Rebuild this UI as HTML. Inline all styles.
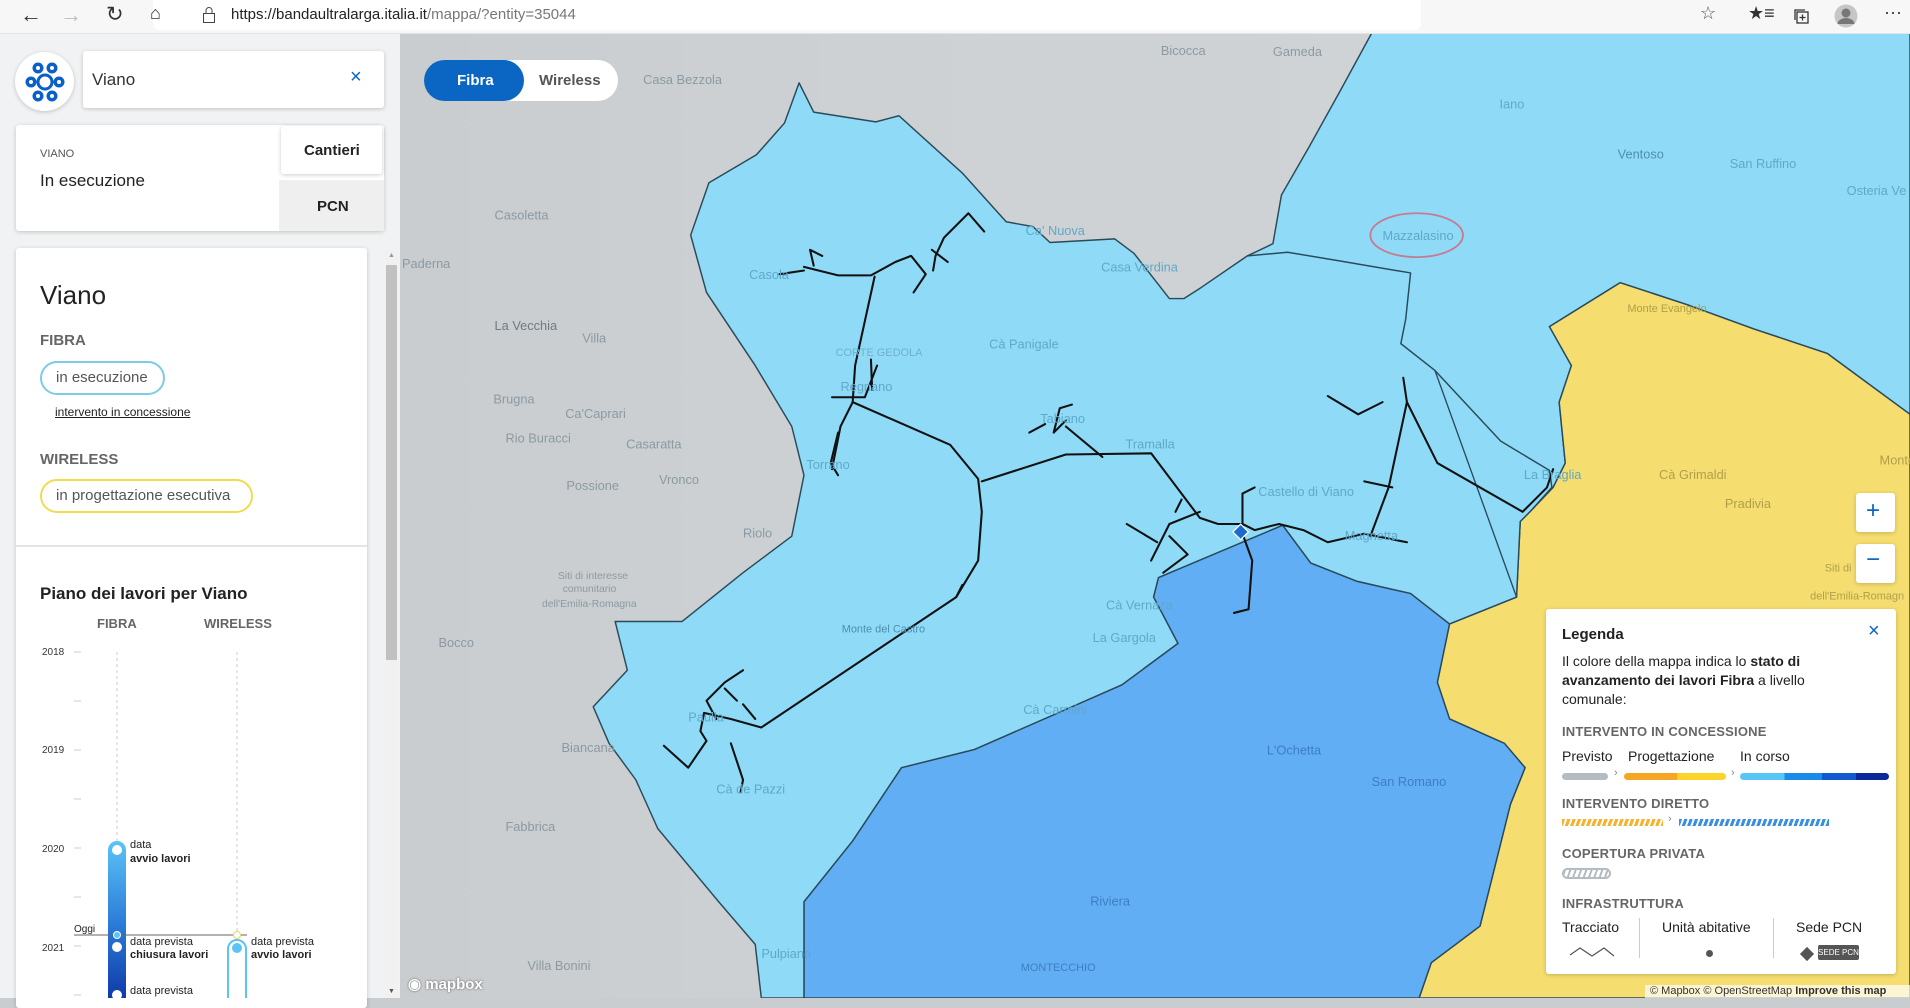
<!DOCTYPE html>
<html><head><meta charset="utf-8"><style>
*{margin:0;padding:0;box-sizing:border-box}
body{width:1910px;height:998px;overflow:hidden;font-family:"Liberation Sans",sans-serif;background:#c9cdd0;position:relative}
.abs{position:absolute}
#map{position:absolute;left:0;top:0;width:1910px;height:998px}
.tb{left:0;top:0;width:1910px;height:34px;background:#f7f7f7;border-bottom:1px solid #e2e2e2}
.url{left:153px;top:0;width:1268px;height:30px;background:#fff;border-radius:0 0 6px 6px}
.side{left:0;top:34px;width:400px;height:964px;background:#f1f2f3}
.card{background:#fff;box-shadow:0 1px 4px rgba(0,0,0,.2)}
.t{position:absolute;white-space:nowrap}
.leg .h{font-size:13px;font-weight:bold;color:#666;letter-spacing:.2px}
</style></head><body>
<svg id="map" viewBox="0 0 1568 819" preserveAspectRatio="none">
<defs>
<linearGradient id="gbg" x1="0" x2="1"><stop offset="0" stop-color="#c5c9cc"/><stop offset=".45" stop-color="#cdd1d3"/><stop offset="1" stop-color="#d2d5d7"/></linearGradient>
</defs>
<rect width="1568" height="819" fill="url(#gbg)"/>
<g fill="#8fdbf7" stroke="#2a4a5a" stroke-width="1.2" stroke-linejoin="round">
<polygon points="1130,20 1568,20 1568,340 1500,290 1440,270 1385,250 1330,232 1272,268 1290,300 1280,330 1285,380 1275,400 1256,420 1248,428 1245,490 1190,512 1158,487 1050,440 1024,210 1045,200 1052,160 1075,120 1100,75"/>
</g>
<polygon fill="#f5dd6f" stroke="#2a4a5a" stroke-width="1.2" points="1272,268 1330,232 1385,250 1440,270 1500,290 1568,340 1568,819 1165,819 1175,790 1215,760 1230,700 1240,660 1252,630 1235,610 1190,590 1180,560 1190,512 1245,490 1248,428 1256,420 1275,400 1285,380 1280,330 1290,300"/>
<polygon fill="#62aef4" stroke="#2a4a5a" stroke-width="1.2" points="951,474 1053,431 1076,462 1114,477 1158,487 1190,512 1180,560 1190,590 1235,610 1252,630 1240,660 1230,700 1215,760 1175,790 1165,819 660,819 660,740 700,690 740,630 800,615 880,580 921,562 967,528 947,490"/>
<polygon fill="#8fdbf7" stroke="#2a4a5a" stroke-width="1.2" stroke-linejoin="round" points="567,193 582,150 621,127 644,101 656,68 668,92 719,100 738,95 790,142 826,182 848,186 862,199 915,196 931,208 960,245 972,245 986,236 1024,210 1057,207 1099,214 1158,224 1154,262 1150,282 1178,304 1232,362 1272,386 1274,400 1256,420 1248,428 1245,490 1190,512 1158,487 1114,477 1076,462 1053,431 951,474 947,490 967,528 921,562 880,580 800,615 740,630 700,690 660,740 660,819 625,819 620,775 590,740 540,680 522,640 500,610 487,580 515,550 505,510 560,510 610,470 650,440 660,390 650,350 620,300 580,240"/>
<path d="M1178,304 L1245,490" stroke="#2a4a5a" stroke-width="1.1" fill="none"/>
<ellipse cx="1163" cy="193" rx="38" ry="18" fill="none" stroke="#c77a90" stroke-width="1.5"/>
<g stroke="#111" stroke-width="1.7" fill="none" stroke-linejoin="round" stroke-linecap="round">
<path d="M808,190 L795,175 L775,195 L768,210 L766,222"/>
<path d="M718,227 L702,300 L700,330 L690,350 L683,385"/>
<path d="M700,330 L780,365 L803,393 L806,420 L803,460 L785,490 L625,597 L600,590 L578,585 L575,600 L580,608 L565,630 L545,612"/>
<path d="M806,395 L875,373 L945,372 L985,425 L1000,430 L1020,430 L1030,435 L1050,430 L1070,435 L1090,445 L1120,438 L1155,445"/>
<path d="M1125,440 L1140,400 L1155,330 L1152,310 M1155,330 L1180,380 L1250,420 L1270,400 L1275,385"/>
<path d="M1090,325 L1115,340 L1135,330 M1120,395 L1143,400"/>
<path d="M1020,438 L1028,460 L1025,500 L1013,503"/>
<path d="M660,219 L688,226 L715,226 L735,215 L748,210 L760,225 L750,240 M765,205 L778,215"/>
<path d="M675,210 L665,205 L668,218 M640,225 L660,222"/>
<path d="M683,326 L710,326 L720,300 M715,295 L716,320 M688,355 L682,380 L688,390"/>
<path d="M985,420 L960,430 L945,460 M960,440 L975,455 L955,470 M925,430 L950,445 M965,420 L970,410 M1020,438 L1020,405 L1030,400"/>
<path d="M875,345 L865,355 L870,335 L880,332 M875,350 L905,375 M845,355 L858,348"/>
<path d="M610,550 L595,560 L580,575 L588,590 M600,610 L610,640 L608,650 M620,590 L610,578 M595,565 L605,575"/>
<path d="M785,490 L790,480"/>
</g>
<rect x="1014" y="432" width="9" height="9" fill="#1a6ad0" stroke="#fff" transform="rotate(45 1018.5 436.5)"/>
<g font-family="Liberation Sans,sans-serif" font-size="10.5" fill="#8b9aa2">
<text x="528" y="69">Casa Bezzola</text><text x="953" y="45">Bicocca</text><text x="1045" y="46">Gameda</text>
<text x="1231" y="89" fill="#5fa8c9">Iano</text><text x="1328" y="130" fill="#4d8fae">Ventoso</text><text x="1420" y="138" fill="#5fa8c9">San Ruffino</text><text x="1516" y="160" fill="#5fa8c9">Osteria Ve</text>
<text x="1135" y="197" fill="#5fa8c9">Mazzalasino</text>
<text x="406" y="180">Casoletta</text><text x="330" y="220">Paderna</text><text x="406" y="271" fill="#6d7b83">La Vecchia</text><text x="478" y="281">Villa</text>
<text x="405" y="331">Brugna</text><text x="464" y="343">Ca'Caprari</text><text x="415" y="363">Rio Buracci</text><text x="514" y="368">Casaratta</text><text x="465" y="402">Possione</text><text x="541" y="397">Vronco</text><text x="610" y="441">Riolo</text>
<text x="360" y="531">Bocco</text><text x="461" y="617">Biancana</text><text x="415" y="682">Fabbrica</text><text x="433" y="796">Villa Bonini</text>
<g fill="#5fa8c9"><text x="842" y="193">Ca' Nuova</text><text x="904" y="223">Casa Verdina</text><text x="615" y="229">Casola</text><text x="812" y="286">Cà Panigale</text><text x="690" y="321">Regnano</text><text x="854" y="347">Tabiano</text><text x="924" y="368">Tramalla</text><text x="1033" y="407">Castello di Viano</text><text x="1251" y="393">La Braglia</text><text x="662" y="385">Torrano</text><text x="908" y="500">Cà Vernaza</text><text x="897" y="527">La Gargola</text><text x="1104" y="443">Magnetta</text><text x="588" y="651">Cà de Pazzi</text><text x="840" y="586">Cà Carmini</text><text x="565" y="592">Paulla</text></g>
<g fill="#3d7fc0"><text x="1040" y="619">L'Ochetta</text><text x="1126" y="645">San Romano</text><text x="895" y="743">Riviera</text></g>
<text x="625" y="786" fill="#5fa8c9">Pulpiano</text>
<text x="838" y="797" font-size="9" fill="#3d7fc0">MONTECCHIO</text>
<text x="691" y="519" font-size="9" fill="#4d8fae">Monte del Castro</text>
<text x="686" y="292" font-size="9" fill="#6fb0cc">CORTE GEDOLA</text>
<g fill="#b0a04a"><text x="1362" y="393">Cà Grimaldi</text><text x="1416" y="417">Pradivia</text><text x="1543" y="381">Monte</text><text x="1336" y="256" font-size="9">Monte Evangelo</text><text x="1498" y="469" font-size="9">Siti di</text><text x="1486" y="492" font-size="9">dell'Emilia-Romagn</text></g>
<g font-size="8.5"><text x="458" y="475">Siti di interesse</text><text x="462" y="486">comunitario</text><text x="445" y="498">dell'Emilia-Romagna</text></g>
</g>
</svg>

<div class="abs tb"></div>
<div class="abs url"></div>
<div class="t" style="left:20px;top:2px;font-size:22px;color:#333">&#8592;</div>
<div class="t" style="left:60px;top:2px;font-size:22px;color:#bbb">&#8594;</div>
<div class="t" style="left:106px;top:2px;font-size:21px;color:#333">&#8635;</div>
<div class="t" style="left:150px;top:3px;font-size:18px;color:#333">&#8962;</div>
<svg class="abs" style="left:202px;top:6px" width="14" height="18"><rect x="1.5" y="7.5" width="11" height="9" fill="none" stroke="#444"/><path d="M4,7.5 V4.5 a3,3 0 0 1 6,0 V7.5" fill="none" stroke="#444"/></svg>
<div class="t" style="left:231px;top:6px;font-size:15px;color:#222">https://<span>bandaultralarga.italia.it</span><span style="color:#777">/mappa/?entity=35044</span></div>
<div class="t" style="left:1700px;top:3px;font-size:18px;color:#555">&#9734;</div>
<div class="t" style="left:1748px;top:3px;font-size:18px;color:#333">&#9733;&#8801;</div>
<svg class="abs" style="left:1792px;top:7px" width="18" height="18"><rect x="5" y="5" width="11" height="11" fill="none" stroke="#333" stroke-width="1.3"/><path d="M3,13 V3 H13" fill="none" stroke="#333" stroke-width="1.3"/><path d="M10.5,7.5 V13.5 M7.5,10.5 H13.5" stroke="#333" stroke-width="1.3"/></svg>
<svg class="abs" style="left:1834px;top:4px" width="24" height="24"><circle cx="12" cy="12" r="11.5" fill="#c6c6c6"/><circle cx="12" cy="9" r="4.5" fill="#777"/><path d="M3.5,20 a8.5,6 0 0 1 17,0 Z" fill="#777"/></svg>
<div class="t" style="left:1884px;top:2px;font-size:18px;color:#333">&middot;&middot;&middot;</div>

<div class="abs side"></div>
<div class="abs" style="left:15px;top:52px;width:59px;height:59px;border-radius:50%;background:#fff;box-shadow:0 1px 4px rgba(0,0,0,.2)"></div>
<svg class="abs" style="left:21px;top:58px" width="48" height="48" viewBox="0 0 48 48"><g fill="#0a5fc8"><circle cx="17" cy="10" r="5.5"/><circle cx="31" cy="10" r="5.5"/><circle cx="10" cy="24" r="5.5"/><circle cx="38" cy="24" r="5.5"/><circle cx="17" cy="38" r="5.5"/><circle cx="31" cy="38" r="5.5"/></g><g fill="#fff"><circle cx="17" cy="10" r="2"/><circle cx="31" cy="10" r="2"/><circle cx="10" cy="24" r="2"/><circle cx="38" cy="24" r="2"/><circle cx="17" cy="38" r="2"/><circle cx="31" cy="38" r="2"/></g><circle cx="24" cy="24" r="7" fill="none" stroke="#0a5fc8" stroke-width="3"/></svg>
<div class="abs card" style="left:83px;top:51px;width:301px;height:57px;border-radius:3px"></div>
<div class="t" style="left:92px;top:70px;font-size:17px;color:#333">Viano</div>
<div class="t" style="left:350px;top:66px;font-size:20px;color:#0a66c2">&#215;</div>

<div class="abs card" style="left:16px;top:125px;width:368px;height:106px;border-radius:3px"></div>
<div class="abs" style="left:279px;top:180px;width:105px;height:51px;background:#efefef"></div>
<div class="abs card" style="left:281px;top:126px;width:101px;height:48px;border-radius:3px"></div>
<div class="t" style="left:304px;top:142px;font-size:15px;font-weight:bold;color:#222">Cantieri</div>
<div class="t" style="left:317px;top:198px;font-size:15px;font-weight:bold;color:#222">PCN</div>
<div class="t" style="left:40px;top:148px;font-size:11px;color:#555">VIANO</div>
<div class="t" style="left:40px;top:171px;font-size:17px;color:#222">In esecuzione</div>

<div class="abs card" style="left:16px;top:248px;width:351px;height:760px;border-radius:3px"></div>
<div class="abs" style="left:16px;top:545px;width:351px;height:2px;background:#e4e4e4"></div>
<div class="abs" style="left:385px;top:250px;width:13px;height:748px;background:#f1f1f1"></div>
<div class="abs" style="left:386px;top:265px;width:11px;height:395px;background:#c1c1c1"></div>
<div class="t" style="left:388px;top:252px;font-size:7px;color:#999">&#9650;</div>
<div class="t" style="left:388px;top:988px;font-size:7px;color:#555">&#9660;</div>
<div class="t" style="left:40px;top:280px;font-size:26px;color:#222">Viano</div>
<div class="t" style="left:40px;top:332px;font-size:15px;font-weight:bold;color:#666">FIBRA</div>
<div class="abs" style="left:40px;top:361px;width:125px;height:34px;border:2px solid #7ccbe8;border-radius:17px"></div>
<div class="t" style="left:56px;top:369px;font-size:15px;color:#555">in esecuzione</div>
<div class="t" style="left:55px;top:405px;font-size:12px;color:#222;text-decoration:underline">intervento in concessione</div>
<div class="t" style="left:40px;top:451px;font-size:15px;font-weight:bold;color:#666">WIRELESS</div>
<div class="abs" style="left:40px;top:479px;width:213px;height:34px;border:2px solid #f0dc50;border-radius:17px"></div>
<div class="t" style="left:56px;top:487px;font-size:15px;color:#555">in progettazione esecutiva</div>

<div class="t" style="left:40px;top:584px;font-size:17px;font-weight:bold;color:#222">Piano dei lavori per Viano</div>
<div class="t" style="left:97px;top:616px;font-size:13px;font-weight:bold;color:#666">FIBRA</div>
<div class="t" style="left:204px;top:616px;font-size:13px;font-weight:bold;color:#666">WIRELESS</div>
<svg class="abs" style="left:30px;top:640px" width="330" height="358">
<g font-family="Liberation Sans,sans-serif" font-size="10" fill="#333"><text x="12" y="15">2018</text><text x="12" y="113">2019</text><text x="12" y="212">2020</text><text x="12" y="311">2021</text></g>
<g stroke="#ccc"><path d="M44,12 H51 M44,61 H51 M44,110 H51 M44,159 H51 M44,208 H51 M44,257 H51 M44,306 H51 M44,355 H51"/></g>
<path d="M87,12 V215 M207,12 V300" stroke="#ccc" stroke-dasharray="3,3"/>
<defs><linearGradient id="fb" x1="0" y1="0" x2="0" y2="1"><stop offset="0" stop-color="#5cc3f6"/><stop offset=".5" stop-color="#2a7ad8"/><stop offset="1" stop-color="#0b2fa0"/></linearGradient></defs>
<rect x="78" y="201" width="18" height="170" rx="9" fill="url(#fb)"/>
<circle cx="87" cy="210" r="5" fill="#fff"/><circle cx="87" cy="307" r="5" fill="#fff"/><circle cx="87" cy="355" r="5" fill="#fff"/>
<rect x="198" y="300" width="18" height="80" rx="9" fill="#fff" stroke="#5cc3f6" stroke-width="2"/>
<circle cx="207" cy="308" r="5" fill="#5cc3f6"/>
<path d="M44,295 H217" stroke="#666"/>
<circle cx="87" cy="295" r="3.5" fill="#5cc3f6" stroke="#fff"/><circle cx="207" cy="295" r="3.5" fill="#fff" stroke="#e8d860"/>
<text x="44" y="292" font-family="Liberation Sans,sans-serif" font-size="10" fill="#222">Oggi</text>
<g font-family="Liberation Sans,sans-serif" font-size="11" fill="#222"><text x="100" y="208">data</text><text x="100" y="222" font-weight="bold">avvio lavori</text><text x="100" y="305">data prevista</text><text x="100" y="318" font-weight="bold">chiusura lavori</text><text x="100" y="354">data prevista</text><text x="221" y="305">data prevista</text><text x="221" y="318" font-weight="bold">avvio lavori</text></g>
</svg>

<div class="abs" style="left:424px;top:60px;width:194px;height:41px;border-radius:21px;background:#fff"></div>
<div class="abs" style="left:424px;top:60px;width:100px;height:41px;border-radius:21px;background:#0a66c2"></div>
<div class="t" style="left:457px;top:72px;font-size:15px;font-weight:bold;color:#fff">Fibra</div>
<div class="t" style="left:539px;top:72px;font-size:15px;font-weight:bold;color:#555">Wireless</div>

<div class="abs card" style="left:1856px;top:493px;width:39px;height:39px;border-radius:3px"></div>
<div class="t" style="left:1866px;top:497px;font-size:24px;color:#0a66c2">+</div>
<div class="abs card" style="left:1856px;top:544px;width:39px;height:39px;border-radius:3px"></div>
<div class="t" style="left:1866px;top:546px;font-size:24px;color:#0a66c2">&#8722;</div>

<div class="abs card leg" style="left:1546px;top:609px;width:350px;height:365px;border-radius:3px">
<div class="t" style="left:16px;top:17px;font-size:15px;font-weight:bold;color:#222">Legenda</div>
<div class="t" style="left:322px;top:11px;font-size:20px;color:#0a66c2">&#215;</div>
<div class="t" style="left:16px;top:43px;font-size:14px;line-height:19px;color:#222;white-space:normal;width:282px">Il colore della mappa indica lo <b>stato di avanzamento dei lavori Fibra</b> a livello comunale:</div>
<div class="t h" style="left:16px;top:115px">INTERVENTO IN CONCESSIONE</div>
<div class="t" style="left:16px;top:139px;font-size:14px;color:#222">Previsto</div>
<div class="t" style="left:82px;top:139px;font-size:14px;color:#222">Progettazione</div>
<div class="t" style="left:194px;top:139px;font-size:14px;color:#222">In corso</div>
<div class="abs" style="left:16px;top:164px;width:46px;height:7px;border-radius:4px;background:#b4bcc2"></div>
<div class="t" style="left:68px;top:158px;font-size:11px;color:#888">&#8250;</div>
<div class="abs" style="left:78px;top:164px;width:102px;height:7px;border-radius:4px;background:linear-gradient(90deg,#f5a623 52%,#fbd32a 52%)"></div>
<div class="t" style="left:185px;top:158px;font-size:11px;color:#888">&#8250;</div>
<div class="abs" style="left:194px;top:164px;width:149px;height:7px;border-radius:4px;background:linear-gradient(90deg,#55c6f6 30%,#1b8be8 30%,#1b8be8 55%,#0f5ad0 55%,#0f5ad0 78%,#0a2a9a 78%)"></div>
<div class="t h" style="left:16px;top:187px">INTERVENTO DIRETTO</div>
<div class="abs" style="left:16px;top:210px;width:101px;height:7px;background:repeating-linear-gradient(110deg,#f5b22a 0 3px,#fff 3px 5px)"></div>
<div class="t" style="left:122px;top:204px;font-size:11px;color:#888">&#8250;</div>
<div class="abs" style="left:133px;top:210px;width:150px;height:7px;background:repeating-linear-gradient(110deg,#3a8fe0 0 3px,#fff 3px 5px)"></div>
<div class="t h" style="left:16px;top:237px">COPERTURA PRIVATA</div>
<div class="abs" style="left:16px;top:259px;width:49px;height:11px;border:2px solid #b4bcc2;border-radius:6px;background:repeating-linear-gradient(110deg,#b4bcc2 0 2px,#fff 2px 5px)"></div>
<div class="t h" style="left:16px;top:287px">INFRASTRUTTURA</div>
<div class="t" style="left:16px;top:310px;font-size:14px;color:#222">Tracciato</div>
<div class="t" style="left:116px;top:310px;font-size:14px;color:#222">Unità abitative</div>
<div class="t" style="left:250px;top:310px;font-size:14px;color:#222">Sede PCN</div>
<div class="abs" style="left:93px;top:309px;width:1px;height:40px;background:#ccc"></div>
<div class="abs" style="left:227px;top:309px;width:1px;height:40px;background:#ccc"></div>
<svg class="abs" style="left:22px;top:336px" width="50" height="14"><path d="M2,10 L12,3 L24,11 L36,3 L46,11" fill="none" stroke="#555" stroke-width="1.2"/></svg>
<div class="abs" style="left:160px;top:341px;width:7px;height:7px;border-radius:50%;background:#555"></div>
<div class="abs" style="left:256px;top:340px;width:10px;height:10px;background:#555;transform:rotate(45deg)"></div>
<div class="abs" style="left:272px;top:336px;width:41px;height:15px;background:#555;border-radius:2px;color:#fff;font-size:8px;line-height:15px;text-align:center">SEDE PCN</div>
</div>

<div class="t" style="left:408px;top:975px;font-size:15px;font-weight:bold;color:#fff;text-shadow:0 0 2px #555">&#9673; mapbox</div>
<div class="abs" style="left:1645px;top:985px;width:265px;height:13px;background:rgba(255,255,255,.7)"></div>
<div class="t" style="left:1650px;top:985px;font-size:11px;color:#333">© Mapbox © OpenStreetMap <b>Improve this map</b></div>
</body></html>
